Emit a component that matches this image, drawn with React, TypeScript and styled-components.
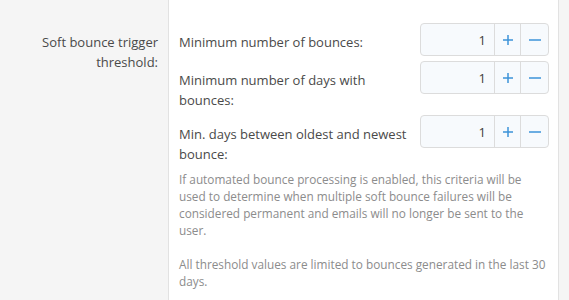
import React from 'react';
import styled, { createGlobalStyle } from 'styled-components';

const GlobalStyle = createGlobalStyle`
  html, body {
    margin: 0;
    padding: 0;
    background: #f5f5f5;
  }
  body {
    font-family: 'Open Sans', 'Noto Sans', sans-serif;
    color: #4a4a4a;
  }
`;

const Page = styled.div`
  width: 569px;
  height: 300px;
  overflow: hidden;
  display: flex;
`;

const FormRow = styled.div`
  width: 558px;
  display: flex;
  background: #fff;
  border-right: 1px solid #e2e2e2;
`;

const RowLabel = styled.div`
  width: 158px;
  flex: none;
  padding: 32px 10px 0 0;
  background: #f5f5f5;
  border-right: 1px solid #e2e2e2;
  text-align: right;
  font-size: 13px;
  line-height: 20px;
`;

const RowInput = styled.div`
  flex: 1;
  padding: 23px 9px 0 10px;
  display: flex;
  flex-direction: column;
`;

const PairList = styled.div`
  display: flex;
  flex-direction: column;
  gap: 5px;
`;

const Pair = styled.div`
  display: flex;
  align-items: flex-start;
  gap: 6px;
`;

const PairLabel = styled.div`
  flex: 1;
  padding-top: 9px;
  font-size: 13px;
  line-height: 20px;
`;

const Spinbox = styled.div`
  width: 127px;
  height: 31px;
  flex: none;
  display: flex;
  border: 1px solid #dcdcdc;
  border-radius: 4px;
  background: #f7fafd;
  overflow: hidden;
`;

const SpinValue = styled.div`
  flex: 1;
  display: flex;
  align-items: center;
  justify-content: flex-end;
  padding-right: 8px;
  font-size: 13px;
  color: #404040;
`;

const SpinButton = styled.button<{ $wide?: boolean }>`
  width: ${({ $wide }) => ($wide ? '28px' : '26px')};
  border: 0;
  border-left: 1px solid #dcdcdc;
  background: transparent;
  padding: 0;
  display: flex;
  align-items: center;
  justify-content: center;
  color: #3d93d8;
  cursor: pointer;
`;

const Explain = styled.div`
  margin-top: 7px;
  font-size: 11.8px;
  line-height: 17px;
  color: #8c8c8c;
`;

const PlusIcon = () => (
  <svg width="12" height="12" viewBox="0 0 12 12">
    <path d="M6 1v10M1 6h10" stroke="currentColor" strokeWidth="1.5" />
  </svg>
);

const MinusIcon = () => (
  <svg width="14" height="12" viewBox="0 0 14 12">
    <path d="M1 6h12" stroke="currentColor" strokeWidth="1.5" />
  </svg>
);

const pairs = [
  'Minimum number of bounces:',
  'Minimum number of days with bounces:',
  'Min. days between oldest and newest bounce:',
];

export default function App() {
  return (
    <>
      <GlobalStyle />
      <Page>
        <FormRow>
          <RowLabel>Soft bounce trigger threshold:</RowLabel>
          <RowInput>
            <PairList>
              {pairs.map((label) => (
                <Pair key={label}>
                  <PairLabel>{label}</PairLabel>
                  <Spinbox>
                    <SpinValue>1</SpinValue>
                    <SpinButton type="button">
                      <PlusIcon />
                    </SpinButton>
                    <SpinButton type="button" $wide>
                      <MinusIcon />
                    </SpinButton>
                  </Spinbox>
                </Pair>
              ))}
            </PairList>
            <Explain>
              If automated bounce processing is enabled, this criteria will be used to
              determine when multiple soft bounce failures will be considered permanent and
              emails will no longer be sent to the user.
              <br />
              <br />
              All threshold values are limited to bounces generated in the last 30 days.
            </Explain>
          </RowInput>
        </FormRow>
      </Page>
    </>
  );
}
